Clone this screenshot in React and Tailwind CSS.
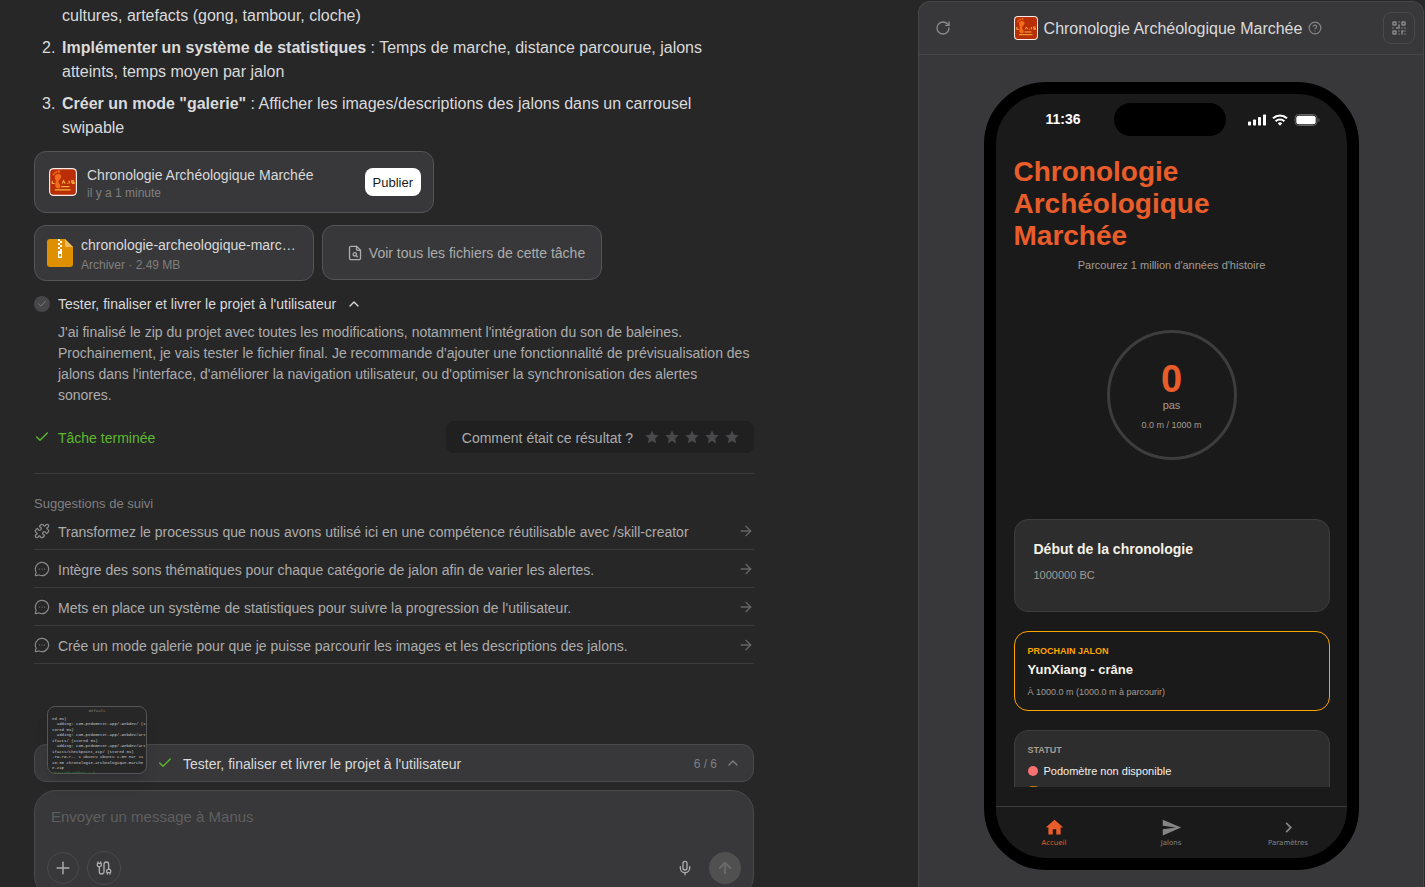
import React from "react";
import {
  RotateCw, CircleHelp, Check, ChevronUp, Puzzle, MessageCircleMore, ArrowRight,
  Plus, Cable, Mic, ArrowUp,
} from "lucide-react";
import { MdHome, MdSend, MdChevronRight } from "react-icons/md";

function AppLogo({ className }) {
  return (
    <svg viewBox="0 0 24 24" className={className} aria-hidden="true">
      <rect width="24" height="24" rx="4" fill="#f6ebe6" />
      <rect x="1" y="1" width="22" height="22" rx="3" fill="#b92e06" />
      <path d="M5.200 6.600c.8-1.700 3.400-2.300 4.700-.9 1.200 1.400.3 3.200-.9 4.300-.9.900-1.100 1.700-.6 2.800.7 1.300 1.700 2.300 1.200 3.600-.6 1.400-2.700 1.500-3.700.1-1.200-1.700-.3-3.300-.2-5.100.100-1.700-1.300-3.100-.5-4.800z" fill="#f26a1b" />
      <circle cx="3.900" cy="5.600" r=".8" fill="#f26a1b" />
      <circle cx="4.900" cy="4.200" r=".8" fill="#f26a1b" />
      <circle cx="6.300" cy="3.400" r=".8" fill="#f26a1b" />
      <circle cx="8.500" cy="3" r="1.100" fill="#f26a1b" />
      <path d="M2.800 11v2.300h2M11.300 13.300l1.200-2.300 1.200 2.300M15.300 13.300h.7M17.300 11v2.300M21.500 11h-2v1.200h2v1.100h-2M10.500 16h7M5 18.700h13.500" stroke="#f3b13c" strokeWidth="1" fill="none" />
    </svg>
  );
}

function ZipIcon() {
  return (
    <svg viewBox="0 0 26 28" className="h-7 w-[26px] shrink-0" aria-hidden="true">
      <path d="M3 0h15l8 8v17a3 3 0 0 1-3 3H3a3 3 0 0 1-3-3V3a3 3 0 0 1 3-3z" fill="#de9000" />
      <path d="M18 0l8 8h-6a2 2 0 0 1-2-2z" fill="#efbc66" />
      <path d="M11 0h2v2h-2zM13 2h2v2h-2zM11 4h2v2h-2zM13 6h2v2h-2zM11 8h2v2h-2zM13 10h2v2h-2z" fill="#fff" />
      <path d="M11 12h4v7h-4zM12 15v2.500h2V15z" fill="#fff" fillRule="evenodd" />
    </svg>
  );
}

function FileSearchIcon() {
  return (
    <svg viewBox="0 0 16 16" className="size-4" fill="none" stroke="currentColor" strokeWidth="1.300" strokeLinecap="round" strokeLinejoin="round" aria-hidden="true">
      <path d="M9.500 1.300H4A1.500 1.500 0 0 0 2.500 2.800v10.400A1.500 1.500 0 0 0 4 14.700h8a1.500 1.500 0 0 0 1.500-1.500V5.300z" />
      <path d="M9.500 1.300v3a1 1 0 0 0 1 1h3" />
      <circle cx="7.800" cy="9.300" r="1.700" />
      <path d="M9.200 10.700l1.100 1.100" />
    </svg>
  );
}

function QrIcon() {
  return (
    <svg viewBox="0 0 16 16" className="size-4" fill="none" stroke="currentColor" strokeWidth="1.500" strokeLinecap="round" strokeLinejoin="round" aria-hidden="true">
      <rect x="2" y="2" width="3" height="3" rx=".5" />
      <rect x="11" y="2" width="3" height="3" rx=".5" />
      <rect x="2" y="11" width="3" height="3" rx=".5" />
      <path d="M8 2v.01M8 5v3H5.500M2 8h.01M11 8h.01M14 8h.01M8 11v.01M8 14v.01M11 14v-3h1M14 11v.01M14 14v.01" />
    </svg>
  );
}

function StarIcon() {
  return (
    <svg viewBox="0 0 14 14" className="size-[14px]" fill="currentColor" aria-hidden="true">
      <path d="M7 .4l2 4.300 4.700.6-3.500 3.200.9 4.700L7 10.900l-4.100 2.300.9-4.700L.3 5.300 5 4.700z" strokeLinejoin="round" />
    </svg>
  );
}

function StatusIcons() {
  return (
    <svg viewBox="0 0 72 12" className="h-3 w-[72px]" aria-hidden="true">
      <g fill="#fff">
        <rect x="0" y="7.500" width="3" height="4" rx=".8" />
        <rect x="5" y="5.500" width="3" height="6" rx=".8" />
        <rect x="10" y="3" width="3" height="8.500" rx=".8" />
        <rect x="15" y="0.500" width="3" height="11" rx=".8" />
        <path d="M34.200 9.200l-2.200 2.600-2.200-2.600a3.300 3.300 0 0 1 4.400 0z" />
      </g>
      <g fill="none" stroke="#fff" strokeWidth="2">
        <path d="M25 4.300a10.200 10.200 0 0 1 14 0" />
        <path d="M27.600 7.200a6.500 6.500 0 0 1 8.800 0" />
      </g>
      <rect x="47" y=".5" width="22" height="11" rx="3.700" fill="none" stroke="#636363" />
      <rect x="48.300" y="1.800" width="19.400" height="8.400" rx="2.500" fill="#fff" />
      <path d="M70.500 4v4c1.300-.6 1.300-3.400 0-4z" fill="#727272" />
    </svg>
  );
}

const terminalLines = [
  "ed 0%)",
  "  adding: com.pedometer.app/.webdev/ (s",
  "tored 0%)",
  "  adding: com.pedometer.app/.webdev/art",
  "ifacts/ (stored 0%)",
  "  adding: com.pedometer.app/.webdev/art",
  "ifacts/checkpoint_zip/ (stored 0%)",
  "-rw-rw-r-- 1 ubuntu ubuntu 2.5M Mar 21",
  "16:35 chronologie-archeologique-marche",
  "e.zip",
];

const suggestions = [
  { icon: Puzzle, stroke: 2, text: "Transformez le processus que nous avons utilisé ici en une compétence réutilisable avec /skill-creator" },
  { icon: MessageCircleMore, stroke: 1.75, text: "Intègre des sons thématiques pour chaque catégorie de jalon afin de varier les alertes." },
  { icon: MessageCircleMore, stroke: 1.75, text: "Mets en place un système de statistiques pour suivre la progression de l'utilisateur." },
  { icon: MessageCircleMore, stroke: 1.75, text: "Crée un mode galerie pour que je puisse parcourir les images et les descriptions des jalons." },
];

function Chat() {
  return (
    <main className="min-w-0 flex-1 overflow-hidden pl-[34px] pr-6">
      <div className="flex max-w-[720px] flex-col">
        <ol className="flex flex-col gap-2 pt-1 text-base leading-6 text-[#dadada]">
          <li className="flex pl-7">cultures, artefacts (gong, tambour, cloche)</li>
          <li className="flex">
            <span className="w-7 shrink-0 pl-2">2.</span>
            <span><strong>Implémenter un système de statistiques</strong> : Temps de marche, distance parcourue, jalons atteints, temps moyen par jalon</span>
          </li>
          <li className="flex">
            <span className="w-7 shrink-0 pl-2">3.</span>
            <span><strong>Créer un mode "galerie"</strong> : Afficher les images/descriptions des jalons dans un carrousel swipable</span>
          </li>
        </ol>

        <section className="mt-[11px] flex h-[62px] w-[400px] items-center rounded-xl border border-[#555557] bg-[#38383a] pl-[14px] pr-3">
          <AppLogo className="size-7 shrink-0" />
          <div className="ml-[10px] flex-1 pt-[2px]">
            <h3 className="text-sm leading-5 text-[#dadada]">Chronologie Archéologique Marchée</h3>
            <p className="text-xs leading-4 text-[#7f7f7f]">il y a 1 minute</p>
          </div>
          <button className="h-7 rounded-lg bg-white px-2 pt-px text-[13px] text-[#1a1a1a]">Publier</button>
        </section>

        <div className="mt-3 flex items-start gap-2">
          <section className="flex h-14 w-[280px] items-center gap-2 rounded-xl border border-[#555557] bg-[#38383a] pl-3 pr-4">
            <ZipIcon />
            <div className="min-w-0 pt-[3px]">
              <h3 className="truncate text-sm leading-5 text-[#dadada]">chronologie-archeologique-marchee.zip</h3>
              <p className="text-xs leading-5 text-[#7f7f7f]">Archiver · 2.49 MB</p>
            </div>
          </section>
          <button className="flex h-[55px] w-[280px] items-center justify-center gap-[6px] rounded-xl border border-[#555557] bg-[#38383a] pl-2 text-sm text-[#acacac]">
            <FileSearchIcon />
            Voir tous les fichiers de cette tâche
          </button>
        </div>

        <button className="mt-3 flex items-center text-left text-sm leading-[22px] text-[#dadada]">
          <span className="mr-2 flex size-4 items-center justify-center rounded-full bg-[#474749] text-[#858585]">
            <Check size={10} strokeWidth={2} />
          </span>
          Tester, finaliser et livrer le projet à l'utilisateur
          <ChevronUp size={16} className="ml-[10px]" />
        </button>
        <p className="mt-[7px] pl-6 text-sm leading-[21px] text-[#acacac]">
          J'ai finalisé le zip du projet avec toutes les modifications, notamment l'intégration du son de baleines. Prochainement, je vais tester le fichier final. Je recommande d'ajouter une fonctionnalité de prévisualisation des jalons dans l'interface, d'améliorer la navigation utilisateur, ou d'optimiser la synchronisation des alertes sonores.
        </p>

        <div className="mt-[15px] flex items-center justify-between">
          <div className="flex items-center gap-2 text-sm text-[#5eb92d]">
            <Check size={16} strokeWidth={2} />
            <span className="pt-[2px]">Tâche terminée</span>
          </div>
          <div className="flex h-8 items-center rounded-lg bg-[#202020] pl-4 pr-[15px] text-sm text-[#acacac]">
            <span className="mr-3 pt-[2px]">Comment était ce résultat ?</span>
            <div className="flex gap-[6px] text-[#4a4a4c]">
              {[1, 2, 3, 4, 5].map((n) => (
                <button key={n} aria-label={`${n} sur 5`}><StarIcon /></button>
              ))}
            </div>
          </div>
        </div>

        <h2 className="mt-5 border-t border-[#3b3b3b] pt-[21px] text-[13px] leading-[17px] text-[#7f7f7f]">Suggestions de suivi</h2>
        <ul>
          {suggestions.map(({ icon: Icon, stroke, text }) => (
            <li key={text} className="border-b border-[#3b3b3b]">
              <button className="flex h-[37px] w-full items-center text-left text-sm text-[#acacac]">
                <Icon size={16} strokeWidth={stroke} className="mr-2 shrink-0 text-[#8a8a8a]" />
                <span className="flex-1 pt-[2px]">{text}</span>
                <ArrowRight size={16} strokeWidth={2} className="shrink-0 text-[#666]" />
              </button>
            </li>
          ))}
        </ul>

        <div className="relative mt-20 flex h-[38px] items-center rounded-xl border border-[#4a4a4c] bg-[#38383a] pl-[122px] pr-3 text-sm text-[#dadada]">
          <div className="absolute bottom-[7px] left-3 h-[68px] w-[100px] overflow-hidden rounded-lg border border-[#555557] bg-[#272728] px-1 pt-[2px] font-['Liberation_Mono',monospace] text-[4px] leading-[5px] text-[#c8c8c8] shadow-lg">
            <div className="text-center text-[#858585]">default</div>
            <div className="mt-[3px] flex h-[54px] flex-col justify-between">
              {terminalLines.map((line, i) => (
                <div key={i} className="whitespace-pre">{line}</div>
              ))}
            </div>
            <div className="whitespace-pre text-[#1f8a1f]">ubuntu@sandbox:~ $</div>
          </div>
          <Check size={16} strokeWidth={2} className="mr-[10px] text-[#5eb92d]" />
          <span className="flex-1 pt-[2px]">Tester, finaliser et livrer le projet à l'utilisateur</span>
          <span className="mr-2 pt-px text-xs text-[#7f7f7f]">6 / 6</span>
          <button aria-label="Déplier"><ChevronUp size={16} className="text-[#7f7f7f]" /></button>
        </div>

        <form className="mt-2 flex flex-col rounded-[22px] border border-[#4a4a4c] bg-[#38383a] px-3 pb-3 pt-[14px]">
          <textarea
            aria-label="Message"
            rows={1}
            placeholder="Envoyer un message à Manus"
            className="h-[46px] resize-none bg-transparent px-1 text-[15px] leading-6 text-[#dadada] outline-none placeholder:text-[#5f5f5f]"
          />
          <div className="flex items-center text-[#acacac]">
            <button type="button" aria-label="Ajouter" className="flex size-8 items-center justify-center rounded-full border border-[#4a4a4c]"><Plus size={20} strokeWidth={1.75} /></button>
            <button type="button" aria-label="Connecteurs" className="ml-2 flex size-[34px] items-center justify-center rounded-full border border-[#4a4a4c]"><Cable size={16} strokeWidth={2} /></button>
            <button type="button" aria-label="Dicter" className="ml-auto mr-4"><Mic size={16} strokeWidth={2} /></button>
            <button type="submit" aria-label="Envoyer" className="flex size-8 items-center justify-center rounded-full bg-[#505050] text-[#6a6a6a]"><ArrowUp size={18} strokeWidth={2.500} /></button>
          </div>
        </form>
      </div>
    </main>
  );
}

function Phone() {
  return (
    <div className="flex h-[788px] w-[375px] shrink-0 flex-col overflow-hidden rounded-[62px] border-[12px] border-black bg-[#1a1a1a]">
      <div className="mt-[9px] flex h-[33px] items-center justify-between pl-[50px] pr-[27px]">
        <span className="w-[46px] pb-px text-sm font-bold text-white">11:36</span>
        <span className="h-[33px] w-28 rounded-full bg-black" />
        <StatusIcons />
      </div>
      <div className="flex min-h-0 flex-1 flex-col overflow-hidden pl-[18px] pr-[17px] pt-5 text-[#a39c92]">
        <h1 className="text-[28px] font-bold leading-[32px] text-[#e85d2a]">Chronologie<br />Archéologique<br />Marchée</h1>
        <p className="mt-[5px] text-center text-[11px] leading-4">Parcourez 1 million d'années d'histoire</p>
        <div className="mx-auto mt-[57px] flex size-[130px] shrink-0 flex-col items-center justify-center rounded-full border-[3px] border-[#3d3d3d]">
          <span className="mt-1 text-[38px] font-bold leading-9 text-[#e85d2a]">0</span>
          <span className="text-[11px] leading-4">pas</span>
          <span className="mt-1 text-[9px] leading-4">0.0 m / 1000 m</span>
        </div>
        <section className="mt-[59px] h-[93px] shrink-0 rounded-[14px] border border-[#3d3d3d] bg-[#2d2d2d] px-[19px] pt-[19px]">
          <h2 className="text-sm font-bold leading-5 text-[#f5f1e8]">Début de la chronologie</h2>
          <p className="mt-2 text-[11px] leading-4">1000000 BC</p>
        </section>
        <section className="mt-[19px] h-20 shrink-0 rounded-[14px] border border-[#ffa500] px-[13px] pt-3">
          <h3 className="text-[9px] font-bold leading-[14px] text-[#ffa500]">PROCHAIN JALON</h3>
          <p className="mt-1 text-[13px] font-bold leading-4 text-[#f5f1e8]">YunXiang - crâne</p>
          <p className="mt-[7px] text-[9px] leading-[14px]">À 1000.0 m (1000.0 m à parcourir)</p>
        </section>
        <section className="mt-[19px] h-[90px] shrink-0 rounded-t-[14px] border border-[#3d3d3d] bg-[#2d2d2d] px-[13px] pt-3">
          <h3 className="text-[9px] font-bold leading-[14px]">STATUT</h3>
          <p className="mt-[7px] flex items-center gap-[6px] text-[11px] leading-[14px] text-[#f5f1e8]"><span className="size-[10px] rounded-full bg-[#f87171]" />Podomètre non disponible</p>
          <div className="mt-2 h-[10px] w-[11px] rounded-sm bg-[#b97a0c]" />
        </section>
      </div>
      <nav className="mt-[19px] grid h-[52px] shrink-0 grid-cols-3 border-t border-[#3d3d3d] pt-[10px] font-['DejaVu_Sans',sans-serif] text-[7px] leading-[10px] text-[#858585]">
        <a href="#accueil" className="flex flex-col items-center text-[#e85d2a]"><MdHome size={21} />Accueil</a>
        <a href="#jalons" className="flex flex-col items-center"><MdSend size={21} />Jalons</a>
        <a href="#parametres" className="flex flex-col items-center"><MdChevronRight size={21} />Paramètres</a>
      </nav>
    </div>
  );
}

export default function App() {
  return (
    <div className="flex h-screen overflow-hidden bg-[#272728] font-['Liberation_Sans',Arial,sans-serif]">
      <Chat />
      <aside className="mr-px mt-px flex w-[506px] shrink-0 flex-col rounded-t-xl border border-b-0 border-[#474749] bg-[#38383a]">
        <header className="flex h-[53px] shrink-0 items-center border-b border-[#474749] pl-4 pr-2">
          <button aria-label="Actualiser" className="text-[#8a8a8a]"><RotateCw size={16} strokeWidth={2} /></button>
          <div className="flex flex-1 items-center justify-center gap-[6px] pl-[2px]">
            <AppLogo className="size-6" />
            <h1 className="pt-[2px] text-base text-[#dadada]">Chronologie Archéologique Marchée</h1>
            <CircleHelp size={14} strokeWidth={2} className="text-[#858585]" />
          </div>
          <button aria-label="Code QR" className="flex size-8 items-center justify-center rounded-lg border border-[#4a4a4c] text-[#8a8a8a]"><QrIcon /></button>
        </header>
        <div className="flex min-h-0 flex-1 justify-center pt-[27px]"><Phone /></div>
      </aside>
    </div>
  );
}
